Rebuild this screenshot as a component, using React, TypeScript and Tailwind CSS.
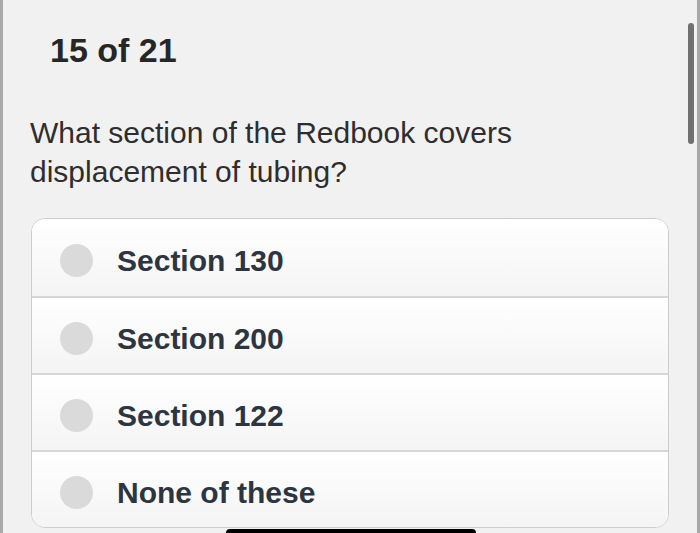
import React from "react";

const options = ["Section 130", "Section 200", "Section 122", "None of these"];

const App = () => {
    return (
        <div
            className="relative w-[700px] h-[533px] overflow-hidden bg-[#f1f1f1] border-l-[3px] border-r-[3px] border-[#a9a9a9]"
            style={{ fontFamily: '"Liberation Sans", Arial, sans-serif' }}
        >
            {/* Scroll thumb */}
            <div className="absolute right-[3px] top-[23px] w-[6px] h-[121px] rounded-full bg-[#707070]" />

            <div className="pl-[47px] pt-[30px]">
                <h1 className="text-[34px] leading-[40px] font-bold text-[#262626]">
                    15 of 21
                </h1>
            </div>

            <p className="ml-[27px] mt-[43px] text-[30px] leading-[39px] text-[#2e2e2e]">
                What section of the Redbook covers
                <br />
                displacement of tubing?
            </p>

            {/* Answer list */}
            <div className="ml-[28px] mt-[27px] w-[638px] rounded-[14px] border border-[#cdcdcd] overflow-hidden bg-white">
                {options.map((label, i) => (
                    <div
                        key={label}
                        className={`flex items-center h-[77px] pt-[5px] bg-gradient-to-b from-white to-[#f4f4f4] ${
                            i > 0 ? "border-t-2 border-[#d6d6d6]" : ""
                        }`}
                    >
                        <span className="ml-[28px] w-[33px] h-[33px] rounded-full bg-[#dadada]" />
                        <span className="ml-[24px] text-[30px] font-bold text-[#2c3540]">
                            {label}
                        </span>
                    </div>
                ))}
            </div>

            {/* Home indicator */}
            <div className="absolute left-[223px] bottom-[-4px] w-[250px] h-[8px] rounded-full bg-black" />
        </div>
    );
};

export default App;
